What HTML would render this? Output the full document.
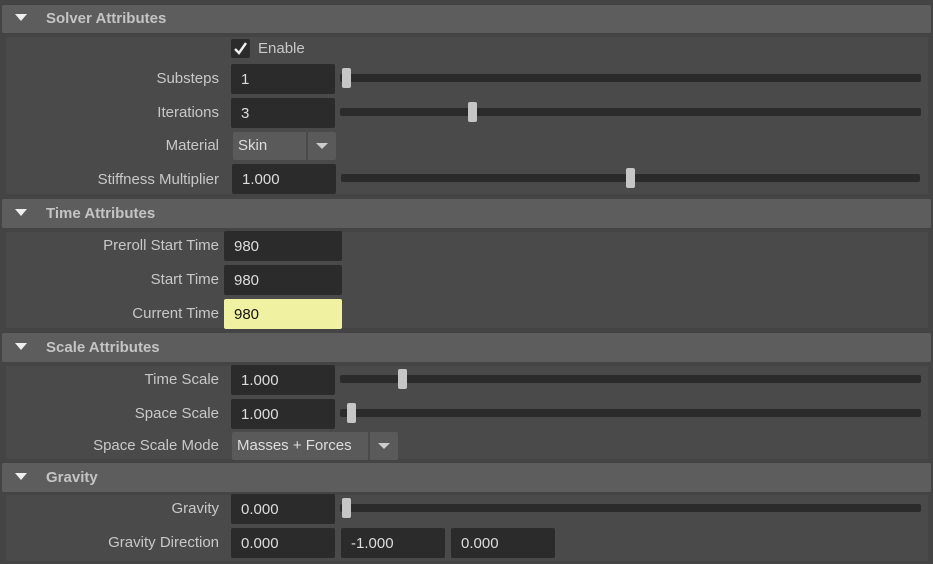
<!DOCTYPE html>
<html><head><meta charset="utf-8"><style>
*{margin:0;padding:0;box-sizing:border-box}
body{width:933px;height:564px;background:#444;position:relative;overflow:hidden;font-family:"Liberation Sans",sans-serif;font-size:15px;color:#c8c8c8}
.hdr{position:absolute;left:2px;width:929px;background:#5d5d5d;border-radius:2px}
.hdr b{position:absolute;left:44px;top:6px;font-size:15px;color:#c4c4c4}
.tri{position:absolute;left:13px;width:0;height:0;border-left:6px solid transparent;border-right:6px solid transparent;border-top:7px solid #eee}
.body{position:absolute;left:6px;width:922px;background:#4a4a4a}
.lbl{position:absolute;right:714px;text-align:right;white-space:nowrap}
.f{position:absolute;background:#2b2b2b;border-radius:2px;height:30px;padding:7px 0 0 10px;color:#ddd;width:104px}
.tr{position:absolute;left:340px;width:581px;height:8px;background:#2b2b2b;border-radius:2px}
.h{position:absolute;width:9px;height:20px;background:#c6c6c6;border-radius:2px}
.dd{position:absolute;background:#5a5a5a;height:28px;border-radius:2px;padding:5px 0 0 5px;color:#ddd}
.dd i{position:absolute;right:0;top:0;width:30px;height:28px;border-left:2px solid #4a4a4a}
.dd i:after{content:"";position:absolute;left:8px;top:11px;border-left:6px solid transparent;border-right:6px solid transparent;border-top:6px solid #ccc}
</style></head><body>

<div class="hdr" style="top:5px;height:28px"><div class="tri" style="top:9px"></div><b style="top:5px">Solver Attributes</b></div>
<div class="body" style="top:37px;height:157px"></div>
<div style="position:absolute;left:231px;top:39px;width:19px;height:19px;background:#2b2b2b;border-radius:2px"></div>
<svg style="position:absolute;left:233px;top:41px" width="15" height="15"><path d="M2 8 L6 12 L13 2" stroke="#eee" stroke-width="2.4" fill="none"/></svg>
<div style="position:absolute;left:258px;top:40px">Enable</div>

<div class="lbl" style="top:70px">Substeps</div>
<div class="f" style="left:231px;top:64px">1</div>
<div class="tr" style="top:74px"></div><div class="h" style="left:342px;top:68px"></div>

<div class="lbl" style="top:104px">Iterations</div>
<div class="f" style="left:231px;top:98px">3</div>
<div class="tr" style="top:108px"></div><div class="h" style="left:468px;top:102px"></div>

<div class="lbl" style="top:137px">Material</div>
<div class="dd" style="left:233px;top:132px;width:103px">Skin<i></i></div>

<div class="lbl" style="top:171px">Stiffness Multiplier</div>
<div class="f" style="left:232px;top:164px">1.000</div>
<div class="tr" style="top:174px;left:341px;width:579px"></div><div class="h" style="left:626px;top:168px"></div>

<div class="hdr" style="top:199px;height:29px"><div class="tri" style="top:10px"></div><b style="top:6px">Time Attributes</b></div>
<div class="body" style="top:232px;height:96px"></div>
<div class="lbl" style="top:237px">Preroll Start Time</div>
<div class="f" style="left:224px;top:231px;width:118px">980</div>
<div class="lbl" style="top:271px">Start Time</div>
<div class="f" style="left:224px;top:265px;width:118px">980</div>
<div class="lbl" style="top:305px">Current Time</div>
<div class="f" style="left:224px;top:299px;width:118px;background:#f1f1a2;color:#111">980</div>

<div class="hdr" style="top:333px;height:29px"><div class="tri" style="top:10px"></div><b style="top:6px">Scale Attributes</b></div>
<div class="body" style="top:366px;height:93px"></div>
<div class="lbl" style="top:371px">Time Scale</div>
<div class="f" style="left:231px;top:365px">1.000</div>
<div class="tr" style="top:375px"></div><div class="h" style="left:398px;top:369px"></div>
<div class="lbl" style="top:405px">Space Scale</div>
<div class="f" style="left:231px;top:399px">1.000</div>
<div class="tr" style="top:409px"></div><div class="h" style="left:347px;top:403px"></div>
<div class="lbl" style="top:437px">Space Scale Mode</div>
<div class="dd" style="left:232px;top:432px;width:166px">Masses + Forces<i></i></div>

<div class="hdr" style="top:463px;height:29px"><div class="tri" style="top:10px"></div><b style="top:6px">Gravity</b></div>
<div class="body" style="top:495px;height:66px"></div>
<div class="lbl" style="top:500px">Gravity</div>
<div class="f" style="left:231px;top:494px">0.000</div>
<div class="tr" style="top:504px"></div><div class="h" style="left:342px;top:498px"></div>
<div class="lbl" style="top:534px">Gravity Direction</div>
<div class="f" style="left:231px;top:528px">0.000</div>
<div class="f" style="left:341px;top:528px">-1.000</div>
<div class="f" style="left:451px;top:528px">0.000</div>
</body></html>
